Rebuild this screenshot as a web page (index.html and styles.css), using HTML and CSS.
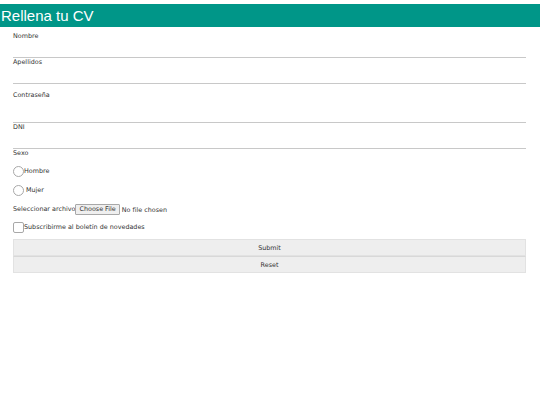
FILE: index.html
```html
<!DOCTYPE html>
<html lang="es">
<head>
<meta charset="utf-8">
<title>Rellena tu CV</title>
<link rel="stylesheet" href="styles.css">
</head>
<body>
<header class="topbar">
  <h1 class="title">Rellena tu CV</h1>
</header>
<form class="cv-form">
  <div class="field">
    <label class="lbl" for="nombre">Nombre</label>
    <input class="txt" type="text" id="nombre">
  </div>
  <div class="field">
    <label class="lbl" for="apellidos">Apellidos</label>
    <input class="txt" type="text" id="apellidos">
  </div>
  <div class="field field-pass">
    <label class="lbl" for="pass">Contraseña</label>
    <input class="txt txt-pass" type="password" id="pass">
  </div>
  <div class="field">
    <label class="lbl" for="dni">DNI</label>
    <input class="txt" type="text" id="dni">
  </div>
  <div class="field">
    <span class="lbl">Sexo</span>
  </div>
  <div class="choice choice-first">
    <input class="radio" type="radio" name="sexo" id="hombre"><label class="opt" for="hombre">Hombre</label>
  </div>
  <div class="choice">
    <input class="radio" type="radio" name="sexo" id="mujer"><label class="opt opt-gap" for="mujer">Mujer</label>
  </div>
  <div class="file-row">
    <label class="opt" for="archivo">Seleccionar archivo</label><input class="file" type="file" id="archivo">
  </div>
  <div class="choice check-row">
    <input class="check" type="checkbox" id="boletin"><label class="opt" for="boletin">Subscribirme al boletín de novedades</label>
  </div>
  <div class="actions">
    <button class="btn" type="submit">Submit</button>
    <button class="btn" type="reset">Reset</button>
  </div>
</form>
</body>
</html>
```

FILE: styles.css
```css
html, body {
  margin: 0;
  padding: 0;
  background: #ffffff;
}

body {
  font-family: "DejaVu Sans", Verdana, sans-serif;
  font-size: 6.4px;
  color: #333333;
}

.topbar {
  margin-top: 4px;
  height: 23px;
  background: #009688;
  display: flex;
  align-items: center;
}

.title {
  margin: 0 0 0 1px;
  font-family: "Liberation Sans", Arial, sans-serif;
  font-weight: normal;
  font-size: 15px;
  line-height: 23px;
  color: #ffffff;
}

.cv-form {
  padding: 5px 14px 0 13px;
  display: flex;
  flex-direction: column;
}

.field {
  display: flex;
  flex-direction: column;
}

.lbl {
  display: block;
  height: 9px;
  line-height: 9px;
  font-size: 6.4px;
}

.txt {
  display: block;
  box-sizing: border-box;
  width: 100%;
  height: 17px;
  margin: 0;
  padding: 0;
  border: none;
  border-bottom: 1px solid #c8c8c8;
  outline: none;
  background: transparent;
  font-size: 7px;
}

.field-pass {
  margin-top: 7px;
}

.txt-pass {
  height: 23px;
}

.choice {
  display: flex;
  align-items: center;
  height: 19px;
}

.choice-first {
  margin-top: 4px;
}

.radio {
  appearance: none;
  -webkit-appearance: none;
  box-sizing: border-box;
  width: 11px;
  height: 11px;
  margin: 0;
  border: 1px solid #a8a8a8;
  border-radius: 50%;
  background: #ffffff;
}

.check {
  appearance: none;
  -webkit-appearance: none;
  box-sizing: border-box;
  width: 11px;
  height: 11px;
  margin: 0;
  border: 1px solid #a8a8a8;
  border-radius: 2px;
  background: #ffffff;
}

.opt {
  font-size: 6.4px;
  line-height: 9px;
}

.opt-gap {
  margin-left: 2px;
}

.file-row {
  display: flex;
  align-items: center;
  height: 18px;
}

.file {
  font-family: "DejaVu Sans", Verdana, sans-serif;
  font-size: 6.4px;
  color: #333333;
  margin: 0;
}

.file::file-selector-button {
  font-family: "DejaVu Sans", Verdana, sans-serif;
  font-size: 6.4px;
  height: 11px;
  padding: 0 3px;
  margin: 0 2px 0 0;
  border: 1px solid #a8a8a8;
  border-radius: 1px;
  background: #efefef;
  color: #333333;
}

.check-row {
  height: 19px;
}

.actions {
  margin-top: 2px;
  display: flex;
  flex-direction: column;
}

.btn {
  display: block;
  width: 100%;
  height: 17px;
  margin: 0;
  padding: 0;
  border: 1px solid #e2e2e2;
  background: #eeeeee;
  font-family: "DejaVu Sans", Verdana, sans-serif;
  font-size: 6.4px;
  color: #333333;
}

.btn + .btn {
  border-top: 1px solid #d8d8d8;
}
```
